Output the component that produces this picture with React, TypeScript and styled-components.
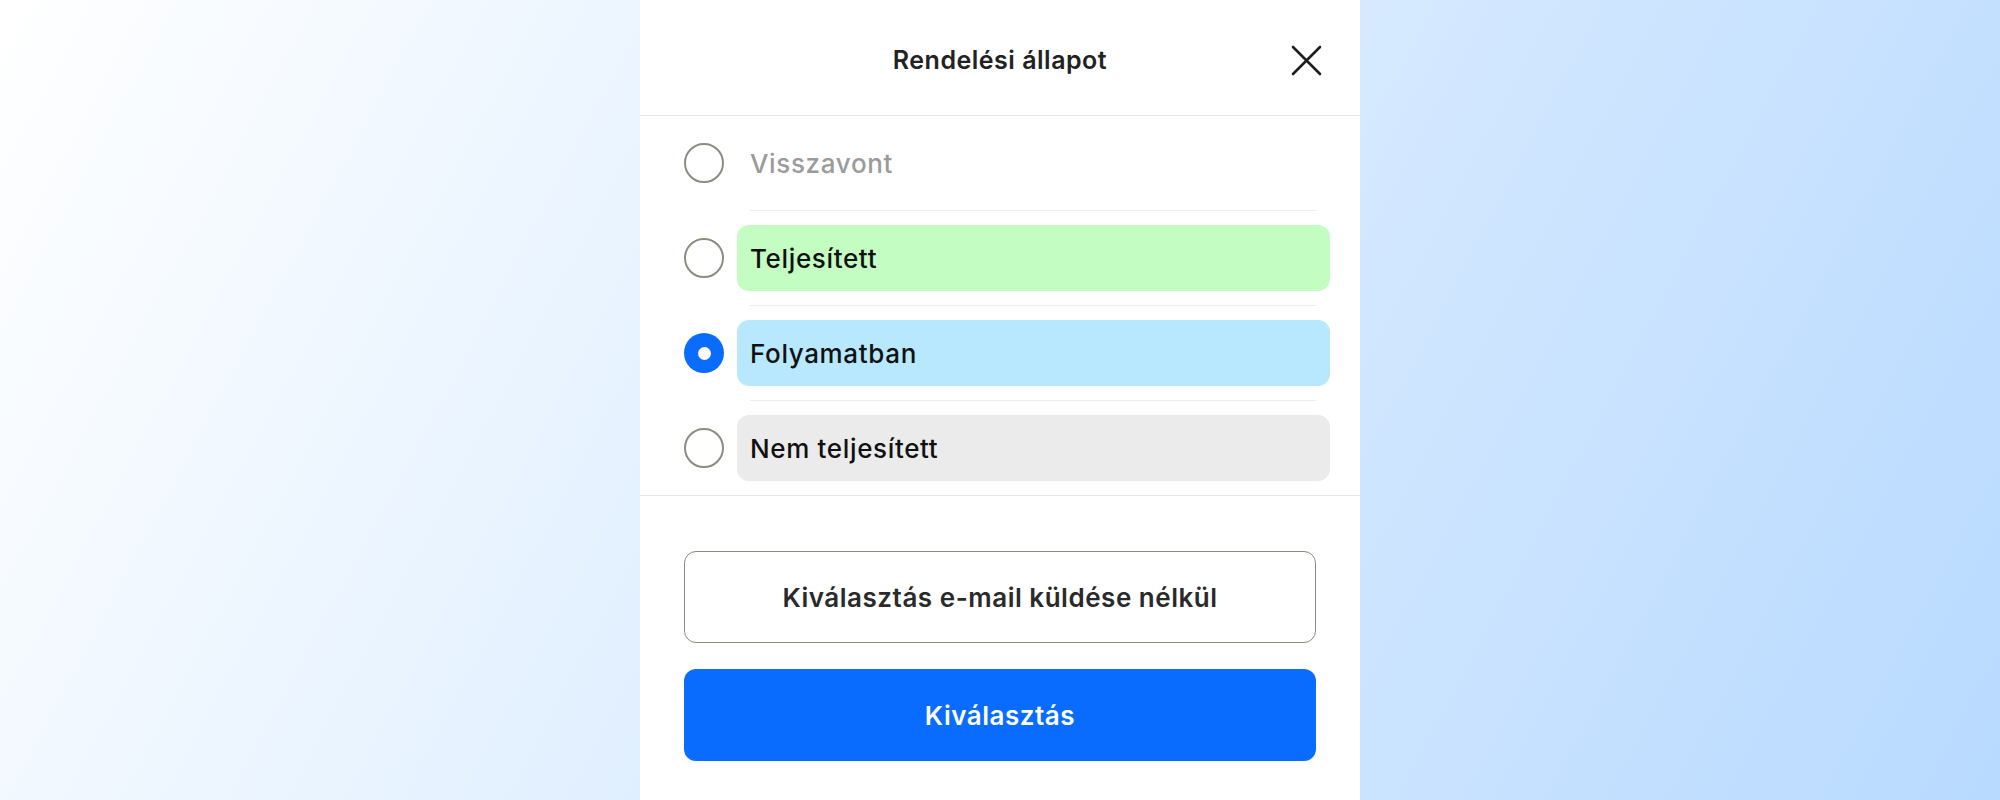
import styled, { createGlobalStyle } from 'styled-components'

const GlobalStyle = createGlobalStyle`
  html, body {
    margin: 0;
    padding: 0;
  }
  body {
    font-family: Inter, 'Noto Sans', sans-serif;
  }
`

const Page = styled.div`
  display: flex;
  justify-content: center;
  width: 100%;
  height: 800px;
  background: linear-gradient(118deg, #ffffff 0%, #e4f1ff 38%, #d2e7ff 62%, #b8daff 100%);
`

const Sheet = styled.div`
  display: flex;
  flex-direction: column;
  width: 720px;
  height: 100%;
  background-color: #ffffff;
`

const Header = styled.div`
  position: relative;
  display: flex;
  justify-content: center;
  align-items: center;
  box-sizing: border-box;
  height: 116px;
  padding-top: 5px;
  border-bottom: 1px solid #e7e7e7;
  h1 {
    margin: 0;
    font-size: 25px;
    font-weight: 600;
    letter-spacing: 0.02em;
    color: #222222;
  }
`

const CloseButton = styled.button`
  position: absolute;
  right: 38px;
  top: 45px;
  width: 31px;
  height: 31px;
  padding: 0;
  border: none;
  background: none;
  cursor: pointer;
`

const List = styled.div`
  display: flex;
  flex-direction: column;
  border-bottom: 1px solid #e7e7e7;
`

const Row = styled.label`
  display: flex;
  align-items: center;
  gap: 13px;
  height: 94px;
  padding: 0 30px 0 44px;
  cursor: pointer;
`

const Separator = styled.div`
  height: 1px;
  margin: 0 44px 0 110px;
  background-color: #ececec;
`

const Radio = styled.span<{ $checked: boolean }>`
  display: flex;
  justify-content: center;
  align-items: center;
  flex-shrink: 0;
  box-sizing: border-box;
  width: 40px;
  height: 40px;
  border-radius: 50%;
  border: ${(p) => (p.$checked ? 'none' : '2px solid #8f8b80')};
  background-color: ${(p) => (p.$checked ? '#0a6cff' : '#ffffff')};
  &::after {
    content: '';
    display: ${(p) => (p.$checked ? 'block' : 'none')};
    width: 13px;
    height: 13px;
    border-radius: 50%;
    background-color: #ffffff;
  }
`

const Pill = styled.span<{ $bg: string; $muted?: boolean }>`
  display: flex;
  align-items: center;
  flex: 1;
  height: 66px;
  padding-left: 13px;
  border-radius: 12px;
  background-color: ${(p) => p.$bg};
  font-size: 26px;
  font-weight: 500;
  letter-spacing: 0.025em;
  color: ${(p) => (p.$muted ? '#9b9b9b' : '#111111')};
`

const Footer = styled.div`
  display: flex;
  flex-direction: column;
  gap: 26px;
  padding: 55px 44px 0;
`

const ActionButton = styled.button<{ $primary?: boolean }>`
  height: 92px;
  border-radius: 12px;
  font-family: Inter, 'Noto Sans', sans-serif;
  font-size: 26px;
  font-weight: 600;
  letter-spacing: 0.02em;
  cursor: pointer;
  border: ${(p) => (p.$primary ? 'none' : '1.5px solid #8f8b80')};
  background-color: ${(p) => (p.$primary ? '#0a6cff' : '#ffffff')};
  color: ${(p) => (p.$primary ? '#ffffff' : '#2a2a2a')};
`

const statuses = [
  { label: 'Visszavont', bg: 'transparent', muted: true, checked: false },
  { label: 'Teljesített', bg: '#c3fdc2', checked: false },
  { label: 'Folyamatban', bg: '#b8e8fd', checked: true },
  { label: 'Nem teljesített', bg: '#ebebeb', checked: false },
]

export default function App() {
  return (
    <>
      <GlobalStyle />
      <Page>
        <Sheet>
          <Header>
            <h1>Rendelési állapot</h1>
            <CloseButton aria-label="Bezárás">
              <svg width="31" height="31" viewBox="0 0 31 31">
                <path d="M2 2 L29 29 M29 2 L2 29" stroke="#1f1f1f" strokeWidth="2.6" strokeLinecap="round" />
              </svg>
            </CloseButton>
          </Header>
          <List>
            {statuses.map((s, i) => (
              <div key={s.label}>
                {i > 0 && <Separator />}
                <Row>
                  <Radio $checked={s.checked} />
                  <Pill $bg={s.bg} $muted={s.muted}>
                    {s.label}
                  </Pill>
                </Row>
              </div>
            ))}
          </List>
          <Footer>
            <ActionButton>Kiválasztás e-mail küldése nélkül</ActionButton>
            <ActionButton $primary>Kiválasztás</ActionButton>
          </Footer>
        </Sheet>
      </Page>
    </>
  )
}
